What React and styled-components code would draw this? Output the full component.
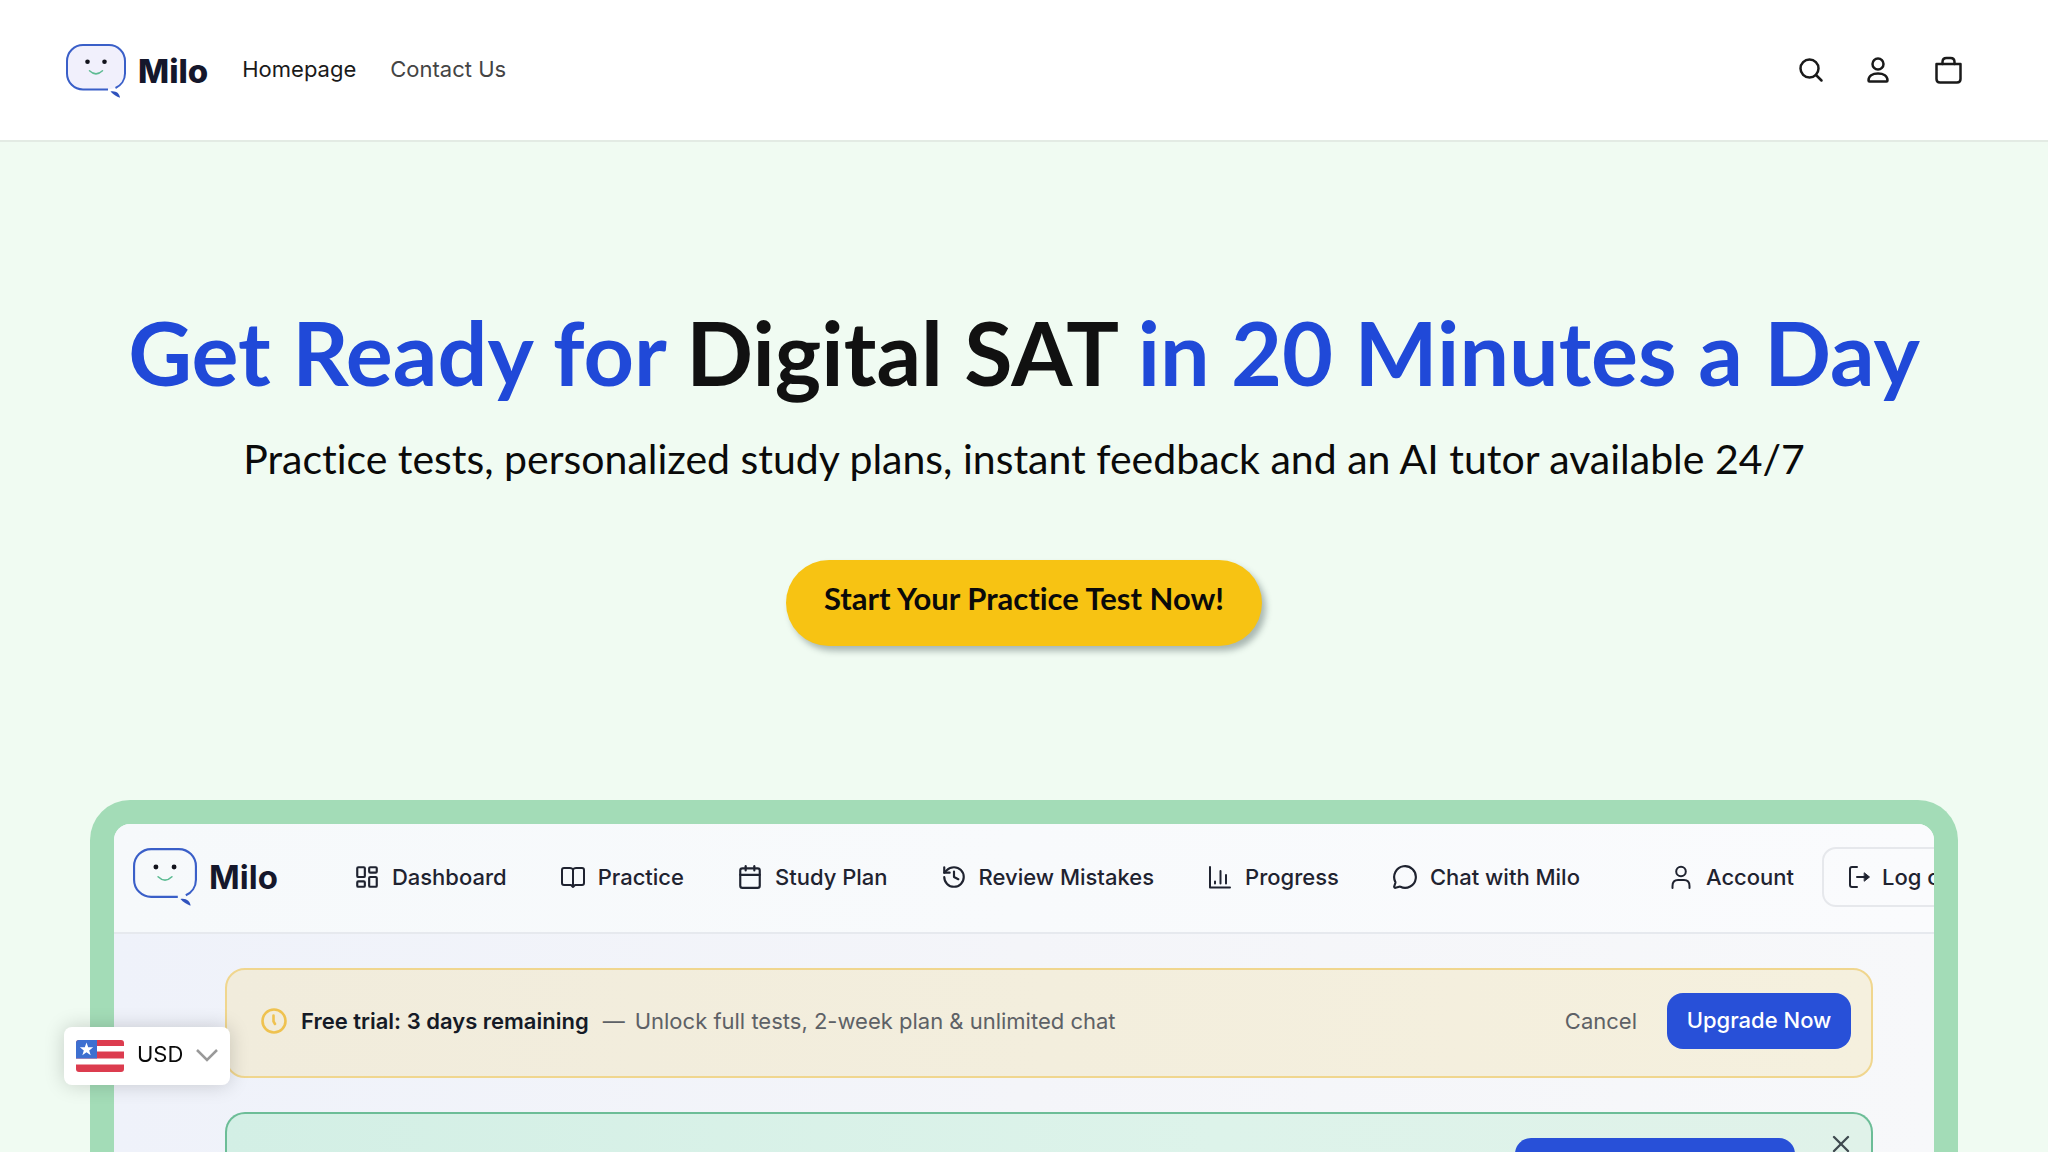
import React, { useState } from 'react';
import styled, { createGlobalStyle } from 'styled-components';
import { LayoutDashboard, Calendar, History, MessageCircle, X } from 'lucide-react';

const GlobalStyle = createGlobalStyle`
  *{
    box-sizing: border-box;
  }
  body{
    margin: 0;
    background: #f0fbf2;
    font-family: Inter, "Liberation Sans", sans-serif;
  }
  a{
    color: inherit;
    text-decoration: none;
  }
  button{
    font: inherit;
    border: 0;
    padding: 0;
    background: none;
    cursor: pointer;
  }
`;

const Page = styled.div`
  display: flex;
  flex-direction: column;
  height: 100vh;
  overflow: hidden;
`;

const Header = styled.header`
  display: flex;
  align-items: center;
  flex-shrink: 0;
  padding: 44px 84px 42px 66px;
  background: #fff;
  border-bottom: 2px solid #e3ebe4;
`;

const Brand = styled.a`
  display: flex;
  align-items: center;
  gap: 12px;
  font-size: 33px;
  line-height: 54px;
  font-weight: ${props => props.$weight || 800};
  color: #15172b;
`;

const HeaderNav = styled.nav`
  display: flex;
  gap: 34px;
  margin-left: 34px;
  font-size: 22px;
  line-height: 50px;
  padding-bottom: 4px;
`;

const HeaderLink = styled.a`
  color: ${props => (props.$active ? '#1a1a1a' : '#444')};
`;

const HeaderActions = styled.div`
  display: flex;
  gap: 38px;
  margin-left: auto;
`;

const IconButton = styled.button`
  display: flex;
  color: ${props => props.$color || '#1a1a1a'};
`;

const Hero = styled.section`
  display: flex;
  flex-direction: column;
  align-items: center;
  flex-shrink: 0;
  padding: 156px 40px 154px;
  text-align: center;
  font-family: Lato, "Open Sans", sans-serif;
  font-variant-ligatures: none;
`;

const Title = styled.h1`
  margin: 0;
  font-size: 88px;
  line-height: 108px;
  font-weight: 700;
  color: #2049d8;
  white-space: nowrap;
  span{
    color: #111;
  }
`;

const Subtitle = styled.p`
  margin: 25px 0 0;
  font-size: 41px;
  line-height: 56px;
  color: #0a0a0a;
`;

const StartButton = styled.button`
  margin-top: 73px;
  padding: 18px 38px 28px;
  border-radius: 43px;
  background: #f7c313;
  box-shadow: 4px 5px 6px rgba(40, 60, 60, 0.35);
  font-size: 31px;
  line-height: 40px;
  font-weight: 700;
  color: #0a0a0a;
`;

const Frame = styled.section`
  flex: 1 0 auto;
  margin: 0 90px;
  border: 24px solid #a3dcb7;
  border-bottom: 0;
  border-radius: 40px 40px 0 0;
  overflow: hidden;
  background: linear-gradient(90deg, #eff2fa, #f4f5f9 50%, #f7f8fa);
`;

const AppBar = styled.div`
  display: flex;
  align-items: center;
  height: 110px;
  padding: 0 0 2px 19px;
  background: linear-gradient(90deg, #f6f9fb, #fafbfd);
  border-bottom: 2px solid #e6e9ee;
  color: #1f2330;
  font-size: 22px;
  font-weight: 500;
  white-space: nowrap;
`;

const AppNav = styled.nav`
  display: flex;
  gap: 53px;
  margin-left: 76px;
`;

const AppLink = styled.a`
  display: flex;
  align-items: center;
  gap: 12px;
`;

const AccountLink = styled(AppLink)`
  margin-left: 88px;
`;

const LogOutButton = styled.button`
  display: flex;
  align-items: center;
  flex-shrink: 0;
  gap: 10px;
  height: 60px;
  margin-left: 28px;
  padding: 0 22px;
  border: 2px solid #e6e8ec;
  border-radius: 14px;
  font-weight: 500;
  color: #1f2330;
`;

const Cards = styled.div`
  display: flex;
  flex-direction: column;
  gap: 34px;
  padding: 34px 61px 0 111px;
`;

const TrialBanner = styled.div`
  display: flex;
  align-items: center;
  height: 110px;
  padding: 0 20px 4px 34px;
  border: 2px solid #f0d68e;
  border-radius: 20px;
  background: linear-gradient(90deg, #f1ecdc, #f5f0de);
  font-size: 22px;
  color: #5d6166;
  strong{
    margin: 0 14px 0 14px;
    font-weight: 600;
    color: #151a26;
  }
`;

const TrialText = styled.span`
  display: flex;
  gap: 10px;
`;

const CancelButton = styled.button`
  margin-left: auto;
  color: #5d6166;
`;

const PrimaryButton = styled.button`
  height: 56px;
  min-width: ${props => props.$width || 184}px;
  padding-bottom: 2px;
  border-radius: 16px;
  background: #2850d8;
  color: #fff;
  font-weight: 500;
`;

const UpgradeButton = styled(PrimaryButton)`
  margin-left: 30px;
`;

const PlanCard = styled.div`
  display: flex;
  justify-content: flex-end;
  align-items: flex-start;
  gap: 32px;
  height: 40px;
  padding: 24px 16px 0;
  border: 2px solid #6cbd97;
  border-bottom: 0;
  border-radius: 20px 20px 0 0;
  background: linear-gradient(90deg, #d3efe5, #ddf3ea 60%, #e0f2e9);
`;

const CloseButton = styled(IconButton)`
  margin-top: -8px;
`;

const CurrencyPicker = styled.label`
  position: fixed;
  left: 64px;
  bottom: 67px;
  display: flex;
  align-items: center;
  gap: 13px;
  height: 58px;
  padding: 0 12px;
  border-radius: 8px;
  background: #fff;
  box-shadow: 0 0 20px rgba(0, 0, 0, 0.18);
  select{
    appearance: none;
    width: 46px;
    padding: 0 0 4px;
    border: 0;
    background: none;
    font: inherit;
    font-size: 22px;
    line-height: 30px;
    color: #0a0a0a;
  }
`;

const Logo = ({ width, height, fill }) => (
  <svg width={width} height={height} viewBox="0 0 60 54" preserveAspectRatio="none" fill="none" aria-hidden="true">
    <path d="M42 45.5H17A16 16 0 0 1 1 29.5V17A16 16 0 0 1 17 1H43A16 16 0 0 1 59 17V29.5C59 36 55 41.5 49.5 44" fill={fill} stroke="#3a5fc8" strokeWidth="2" />
    <path d="M44.5 47.5C50 46.5 53.5 49.5 54 53.8C50.5 52.5 47 50.5 44.5 47.5Z" fill="#2f52bd" />
    <circle cx="21.5" cy="17.7" r="2.3" fill="#12131c" />
    <circle cx="38.5" cy="17.7" r="2.3" fill="#12131c" />
    <path d="M23.5 26.8Q30 33 36.5 26.8" stroke="#5dbb93" strokeWidth="1.5" strokeLinecap="round" />
  </svg>
);

const Stroke = ({ children }) => (
  <svg width="32" height="32" viewBox="0 0 32 32" fill="none" stroke="currentColor" strokeWidth="2.5" strokeLinecap="round" strokeLinejoin="round">
    {children}
  </svg>
);

const SearchIcon = () => (
  <Stroke>
    <circle cx="17.5" cy="13.5" r="9" />
    <path d="M24 20L29.5 25.5" />
  </Stroke>
);

const PersonIcon = () => (
  <Stroke>
    <circle cx="16" cy="9" r="5.5" />
    <path d="M6.5 25.5C6.5 21 10.5 18.5 16 18.5S25.5 21 25.5 25.5Q25.5 26.5 24.5 26.5H7.5Q6.5 26.5 6.5 25.5Z" />
  </Stroke>
);

const BagIcon = () => (
  <Stroke>
    <path d="M4.5 9H28.5V24Q28.5 27.5 25 27.5H8Q4.5 27.5 4.5 24Z" />
    <path d="M10.5 9V7Q10.5 3 14.5 3H18.5Q22.5 3 22.5 7V9" />
  </Stroke>
);

const AppIcon = ({ children }) => (
  <svg width="26" height="26" viewBox="0 0 26 26" fill="none" stroke="currentColor" strokeWidth="2" strokeLinecap="round" strokeLinejoin="round">
    {children}
  </svg>
);

const BookIcon = () => (
  <AppIcon>
    <path d="M13 5.5V23M13 5.5Q12 4 10 4H4Q2 4 2 6V19Q2 21 4 21H11L13 23L15 21H22Q24 21 24 19V6Q24 4 22 4H16Q14 4 13 5.5Z" />
  </AppIcon>
);

const ChartIcon = () => (
  <AppIcon>
    <path d="M3 3V23.5H23M8 19.5V17.5M13.5 19.5V7M19 19.5V11" />
  </AppIcon>
);

const AccountIcon = () => (
  <AppIcon>
    <circle cx="13" cy="7.5" r="4.8" />
    <path d="M4.5 24V22C4.5 18 7 16 10 16H16C19 16 21.5 18 21.5 22V24" />
  </AppIcon>
);

const LogOutIcon = () => (
  <AppIcon>
    <path d="M11 3H6Q4 3 4 5V21Q4 23 6 23H11M11 13H20" />
    <path d="M18.5 9L23.5 13L18.5 17Z" fill="currentColor" strokeWidth="1" />
  </AppIcon>
);

const ClockIcon = () => (
  <svg width="26" height="26" viewBox="0 0 26 26" fill="none" stroke="#efc250" strokeWidth="2.6" strokeLinecap="round">
    <circle cx="13" cy="13" r="11.5" />
    <path d="M12.5 7.5V13.5L14 16" />
  </svg>
);

const Flag = () => (
  <svg width="48" height="32" viewBox="0 0 48 32" aria-hidden="true">
    <clipPath id="flagShape"><rect width="48" height="32" rx="3" /></clipPath>
    <g clipPath="url(#flagShape)">
      <rect width="48" height="32" fill="#dc3c4f" />
      <path d="M0 6H48V11.5H0ZM0 18.5H48V24.5H0Z" fill="#fff" />
      <rect width="21" height="18.5" fill="#3d6fd0" />
      <path d="M10.5 2.5L12.2 7.3H17.2L13.2 10.4L14.7 15.2L10.5 12.3L6.3 15.2L7.8 10.4L3.8 7.3H8.8Z" fill="#fff" />
    </g>
  </svg>
);

const Chevron = () => (
  <svg width="22" height="14" viewBox="0 0 22 14" fill="none" stroke="#999" strokeWidth="2.5" aria-hidden="true">
    <path d="M1 1L11 11L21 1" />
  </svg>
);

const appLinks = [
  { label: 'Dashboard', icon: LayoutDashboard },
  { label: 'Practice', icon: BookIcon },
  { label: 'Study Plan', icon: Calendar },
  { label: 'Review Mistakes', icon: History },
  { label: 'Progress', icon: ChartIcon },
  { label: 'Chat with Milo', icon: MessageCircle },
];

const App = () => {
  const [currency, setCurrency] = useState('USD');
  return (
    <Page>
      <GlobalStyle />
      <Header>
        <Brand href="#"><Logo width={60} height={54} fill="#f1f0fc" />Milo</Brand>
        <HeaderNav>
          <HeaderLink href="#" $active>Homepage</HeaderLink>
          <HeaderLink href="#contact">Contact Us</HeaderLink>
        </HeaderNav>
        <HeaderActions>
          <IconButton aria-label="Search"><SearchIcon /></IconButton>
          <IconButton aria-label="Account"><PersonIcon /></IconButton>
          <IconButton aria-label="Cart"><BagIcon /></IconButton>
        </HeaderActions>
      </Header>
      <Hero>
        <Title>Get Ready for <span>Digital SAT</span> in 20 Minutes a Day</Title>
        <Subtitle>Practice tests, personalized study plans, instant feedback and an AI tutor available 24/7</Subtitle>
        <StartButton>Start Your Practice Test Now!</StartButton>
      </Hero>
      <Frame>
        <AppBar>
          <Brand href="#" $weight={700}><Logo width={64} height={58} fill="none" />Milo</Brand>
          <AppNav>
            {appLinks.map(({ label, icon: Icon }) => (
              <AppLink href="#" key={label}><Icon size={26} strokeWidth={2} />{label}</AppLink>
            ))}
          </AppNav>
          <AccountLink href="#"><AccountIcon />Account</AccountLink>
          <LogOutButton><LogOutIcon />Log out</LogOutButton>
        </AppBar>
        <Cards>
          <TrialBanner>
            <ClockIcon />
            <strong>Free trial: 3 days remaining</strong>
            <TrialText><span>—</span> <span>Unlock full tests, 2-week plan &amp; unlimited chat</span></TrialText>
            <CancelButton>Cancel</CancelButton>
            <UpgradeButton>Upgrade Now</UpgradeButton>
          </TrialBanner>
          <PlanCard>
            <PrimaryButton $width={280} aria-label="Start" />
            <CloseButton aria-label="Close" $color="#3f4a50"><X size={28} strokeWidth={2} /></CloseButton>
          </PlanCard>
        </Cards>
      </Frame>
      <CurrencyPicker>
        <Flag />
        <select aria-label="Currency" value={currency} onChange={e => setCurrency(e.target.value)}>
          <option>USD</option>
          <option>EUR</option>
          <option>GBP</option>
        </select>
        <Chevron />
      </CurrencyPicker>
    </Page>
  );
};

export default App;
